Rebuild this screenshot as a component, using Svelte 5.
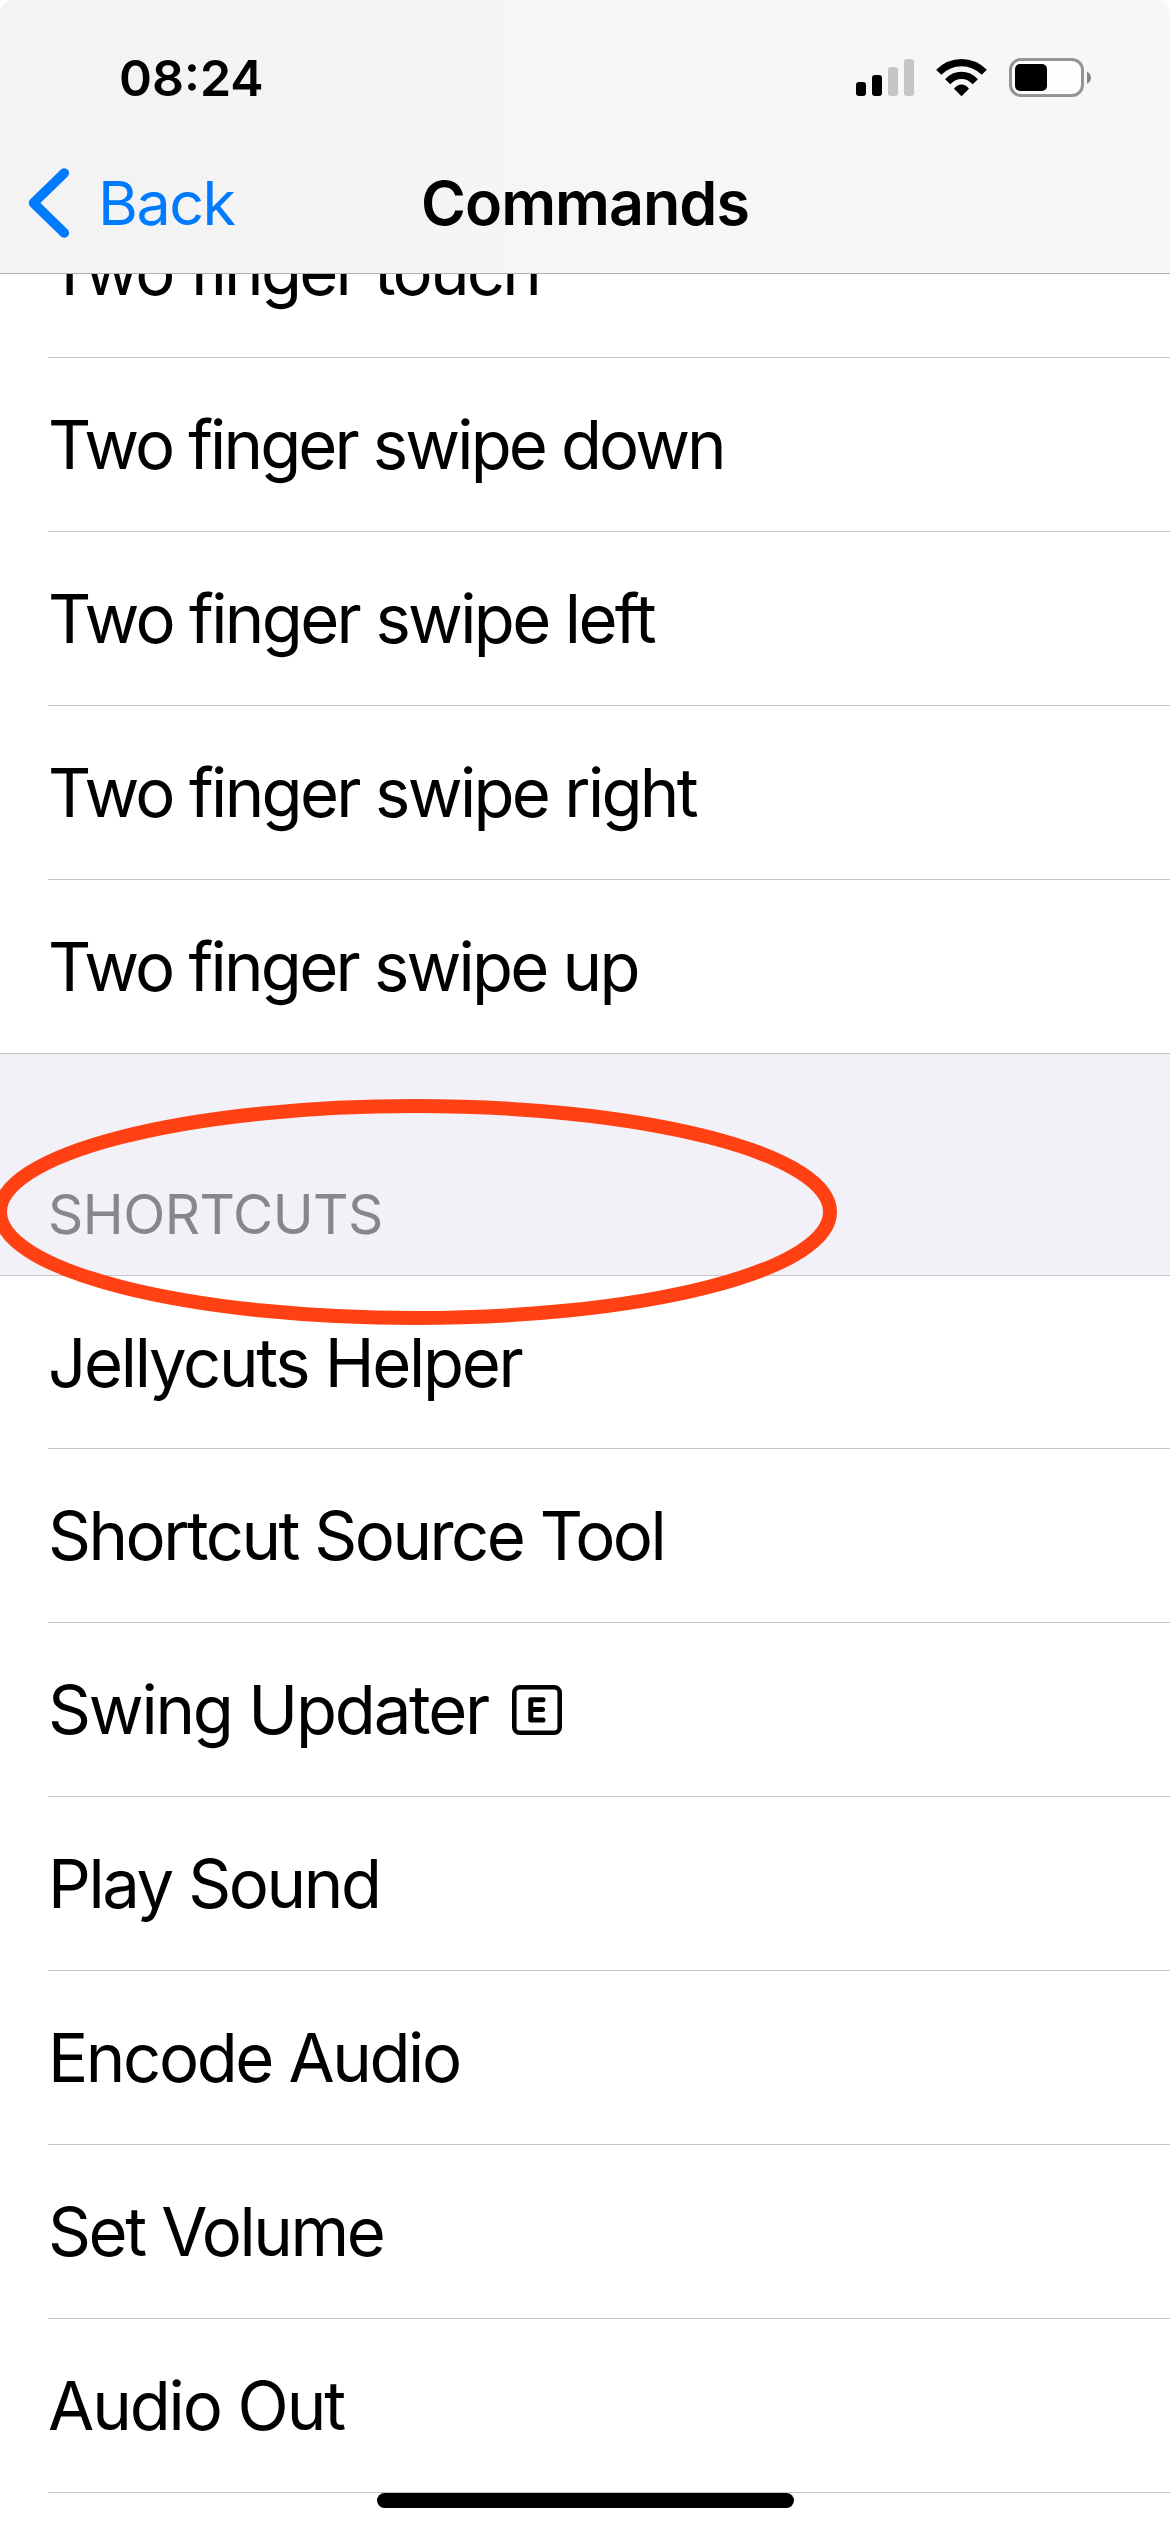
<script lang="ts">
  const gestures = [
    { label: 'Two finger touch', tracking: -2.77 },
    { label: 'Two finger swipe down', tracking: -2.88 },
    { label: 'Two finger swipe left', tracking: -2.65 },
    { label: 'Two finger swipe right', tracking: -2.68 },
    { label: 'Two finger swipe up', tracking: -2.78 },
  ];
  const shortcuts = [
    { label: 'Jellycuts Helper', tracking: -2.3 },
    { label: 'Shortcut Source Tool', tracking: -2.52 },
    { label: 'Swing Updater', tracking: -2.2, badge: true },
    { label: 'Play Sound', tracking: -2.4 },
    { label: 'Encode Audio', tracking: -2.4 },
    { label: 'Set Volume', tracking: -2.4 },
    { label: 'Audio Out', tracking: -2.1 },
  ];
</script>

<div class="screen">
  <header>
    <div class="status">
      <span class="time">08:24</span>
      <svg class="indicators" viewBox="0 0 240 44" width="240" height="44">
        <rect x="0" y="25" width="10" height="14" rx="3" />
        <rect x="16" y="18" width="10" height="21" rx="3" />
        <rect x="32" y="10" width="10" height="29" rx="3" fill="#c5c5c5" />
        <rect x="48" y="2" width="10" height="37" rx="3" fill="#c5c5c5" />
        <path d="M105.5 39.3L98 31.7Q101.500 27.500 105.500 27.500Q109.500 27.500 113 31.700Z" />
        <g fill="none" stroke="#000" stroke-width="7.200">
          <path d="M91.700 24.700Q97.700 18.400 105.500 18.400Q113.300 18.400 119.300 24.700" />
          <path d="M82.700 15.300Q92.500 5.600 105.500 5.600Q118.500 5.600 128.300 15.300" />
        </g>
        <rect x="154.500" y="2.500" width="72" height="36" rx="10.500" fill="#fdfdfd" stroke="#959595" stroke-width="3" />
        <rect x="159" y="7" width="32" height="27" rx="5" />
        <path d="M231 14.500Q235 17 235 20.700Q235 24.500 231 27Z" fill="#858585" />
      </svg>
    </div>
    <div class="nav">
      <div class="back">
        <svg viewBox="0 0 44 74" width="44" height="74">
          <path d="M37.300 7L6.500 37L37.300 67" fill="none" stroke="#007aff" stroke-width="9.600" stroke-linecap="round" stroke-linejoin="round" />
        </svg>
        <span>Back</span>
      </div>
      <h1>Commands</h1>
    </div>
  </header>

  <ul class="gestures">
    {#each gestures as item}
      <li><span style="letter-spacing: {item.tracking}px">{item.label}</span></li>
    {/each}
  </ul>

  <div class="section">
    <h2>SHORTCUTS</h2>
    <svg class="ring" viewBox="-10 0 860 230" width="860" height="230">
      <ellipse cx="415" cy="115" rx="415" ry="106" fill="none" stroke="#ff4114" stroke-width="14" />
    </svg>
  </div>

  <ul class="shortcuts">
    {#each shortcuts as item}
      <li>
        <span style="letter-spacing: {item.tracking}px">{item.label}</span>
        {#if item.badge}
          <svg class="badge" viewBox="0 0 50 58" width="50" height="58">
            <rect x="2.300" y="6.300" width="45.400" height="45.400" rx="5.500" fill="none" stroke="#000" stroke-width="4.600" />
            <path d="M31 18.700H18.800V39H31M18.800 28.600H30.500" fill="none" stroke="#000" stroke-width="5" stroke-linecap="round" stroke-linejoin="round" />
          </svg>
        {/if}
      </li>
    {/each}
  </ul>

  <div class="home"></div>
</div>

<style>
  :global(body) {
    margin: 0;
    background: #fff;
  }
  .screen {
    position: relative;
    width: 1170px;
    height: 2532px;
    overflow: hidden;
    background: #fff;
    color: #000;
    font-family: Inter, 'Liberation Sans', sans-serif;
  }
  header {
    box-sizing: border-box;
    height: 274px;
    border-bottom: 1px solid #b0b0b0;
    border-radius: 14px 14px 0 0;
    background: linear-gradient(90deg, #f3f3f3 0%, #f4f4f4 30%, #f7f7f7 60%, #f7f7f7 100%);
  }
  .status {
    display: flex;
    justify-content: space-between;
    align-items: center;
    height: 156px;
    padding: 0 74px 0 119px;
  }
  .time {
    font-size: 50px;
    font-weight: 600;
    letter-spacing: 0;
  }
  .indicators {
    margin-top: 2px;
  }
  .nav {
    display: grid;
    grid-template-columns: 1fr auto 1fr;
    align-items: center;
    height: 94px;
  }
  .back {
    display: flex;
    align-items: center;
    gap: 27px;
    padding-left: 27px;
    color: #007aff;
    font-size: 61px;
    letter-spacing: -1.5px;
  }
  h1 {
    margin: 0;
    font-size: 61px;
    font-weight: 600;
    letter-spacing: -1px;
  }
  ul {
    margin: 0;
    padding: 0 0 0 48px;
    list-style: none;
  }
  .gestures {
    border-bottom: 1px solid #c6c6c8;
  }
  li {
    display: flex;
    align-items: center;
    box-sizing: border-box;
    height: 174px;
    border-bottom: 1px solid #c6c6c8;
    font-size: 67px;
    line-height: 81px;
    white-space: nowrap;
  }
  /* The top row is scrolled partly under the navigation bar. */
  .gestures li:first-child {
    align-items: flex-end;
    height: 84px;
    padding-bottom: 46px;
    overflow: hidden;
  }
  .gestures li:last-child {
    height: 173px;
    border-bottom: 0;
  }
  .shortcuts li:first-child {
    height: 173px;
  }
  .badge {
    margin-left: 24px;
  }
  .section {
    position: relative;
    box-sizing: border-box;
    height: 222px;
    padding: 126px 0 0 48px;
    border-bottom: 1px solid #c6c6c8;
    background: #f2f1f8;
  }
  h2 {
    margin: 0;
    color: #87868c;
    font-size: 55px;
    font-weight: 400;
    line-height: 68px;
    letter-spacing: -0.5px;
  }
  .ring {
    position: absolute;
    left: -10px;
    top: 43px;
  }
  .home {
    position: absolute;
    left: 377px;
    bottom: 24px;
    width: 417px;
    height: 15px;
    border-radius: 8px;
    background: #000;
  }
</style>
